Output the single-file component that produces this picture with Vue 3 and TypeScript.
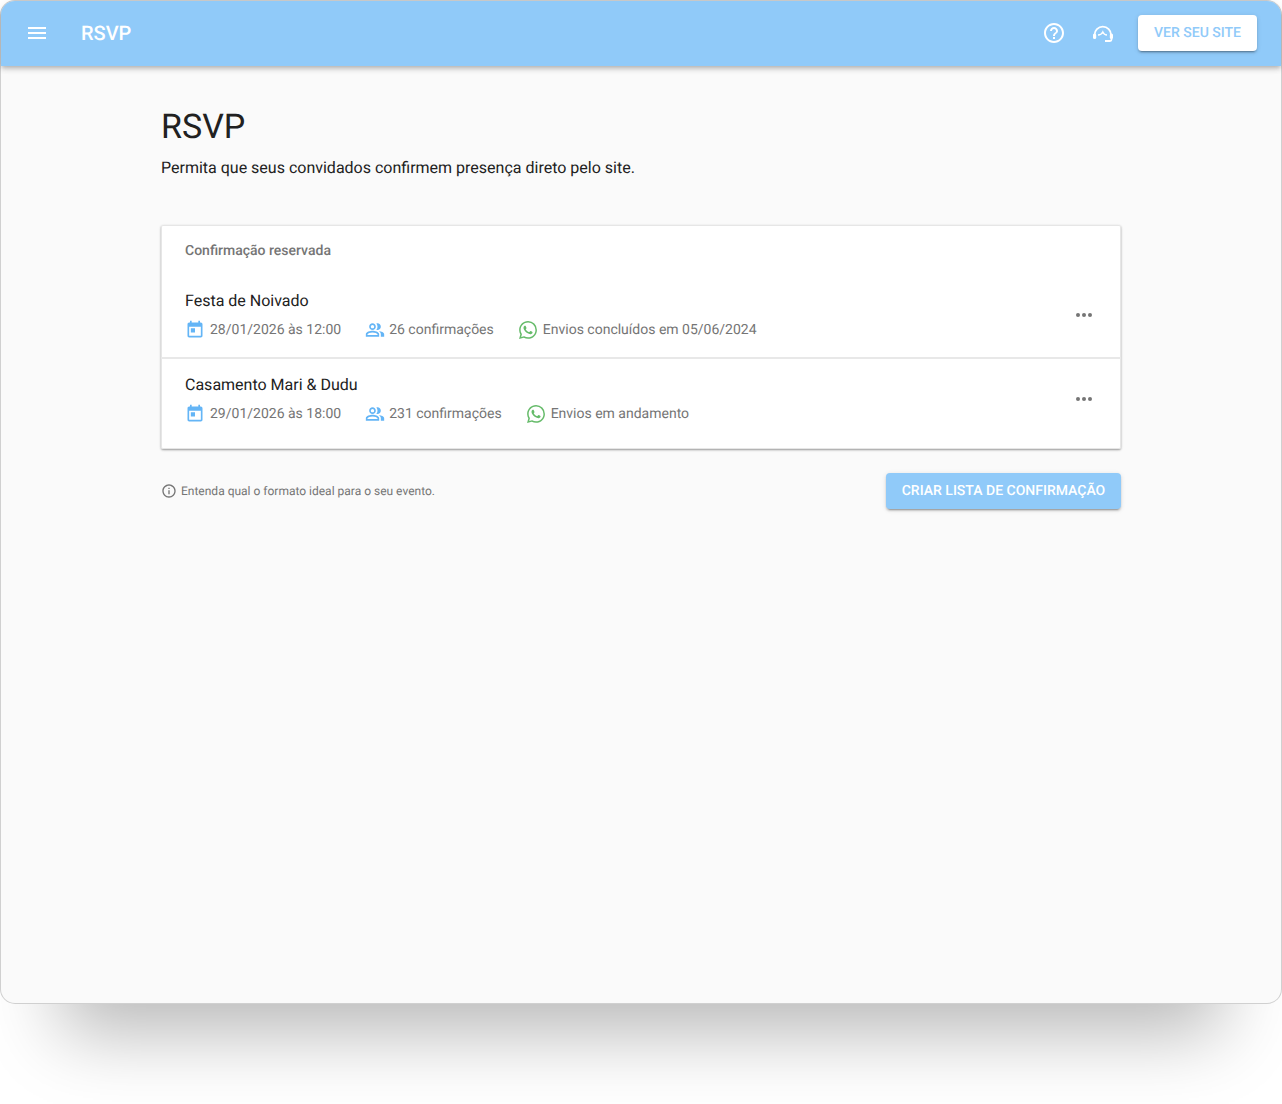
<script setup lang="ts">
interface Row {
  name: string
  date: string
  count: string
  status: string
}
const rows: Row[] = [
  { name: 'Festa de Noivado', date: '28/01/2026 às 12:00', count: '26 confirmações', status: 'Envios concluídos em 05/06/2024' },
  { name: 'Casamento Mari & Dudu', date: '29/01/2026 às 18:00', count: '231 confirmações', status: 'Envios em andamento' },
]
</script>

<template>
  <div class="page">
    <div class="window">
      <header class="bar">
        <svg class="menu" viewBox="0 0 24 24" width="24" height="24"><path fill="#fff" d="M3 18h18v-2H3v2zm0-5h18v-2H3v2zm0-7v2h18V6H3z" /></svg>
        <span class="bar-title">RSVP</span>
        <span class="spacer"></span>
        <svg class="top-icon" viewBox="0 0 24 24" width="24" height="24"><path fill="#fff" d="M11 18h2v-2h-2v2zm1-16C6.48 2 2 6.48 2 12s4.48 10 10 10 10-4.48 10-10S17.52 2 12 2zm0 18c-4.41 0-8-3.59-8-8s3.59-8 8-8 8 3.59 8 8-3.59 8-8 8zm0-14c-2.21 0-4 1.79-4 4h2c0-1.1.9-2 2-2s2 .9 2 2c0 2-3 1.75-3 5h2c0-2.25 3-2.5 3-5 0-2.21-1.79-4-4-4z" /></svg>
        <svg class="top-icon" viewBox="0 0 24 24" width="24" height="24" fill="none" stroke="#fff" stroke-width="1.8">
          <path d="M4.500 14a8.300 8.300 0 0 1 16.600 0" />
          <path d="M8 14c2 0 3.800-1 4.800-3 .8 1.800 2.300 3 4.200 3" stroke-width="1.500" />
          <rect x="3" y="12.500" width="3.200" height="5.500" rx="1.500" fill="#fff" stroke="none" />
          <rect x="19.800" y="12.500" width="3.200" height="5.500" rx="1.500" fill="#fff" stroke="none" />
          <path d="M21.500 17.500v1a1.500 1.500 0 0 1-1.500 1.500h-5" />
        </svg>
        <button class="site-btn">VER SEU SITE</button>
      </header>
      <main class="content">
        <h1 class="title">RSVP</h1>
        <p class="lead">Permita que seus convidados confirmem presença direto pelo site.</p>
        <section class="card">
          <h2 class="card-title">Confirmação reservada</h2>
          <div v-for="row in rows" :key="row.name" class="row">
            <div class="row-main">
              <div class="row-name">{{ row.name }}</div>
              <div class="meta">
                <span class="meta-item">
                  <svg viewBox="0 0 24 24" width="20" height="20"><path fill="#64b5f6" d="M19 3h-1V1h-2v2H8V1H6v2H5c-1.11 0-1.99.9-1.99 2L3 19c0 1.1.89 2 2 2h14c1.1 0 2-.9 2-2V5c0-1.1-.9-2-2-2zm0 16H5V8h14v11zM7 10h5v5H7z" /></svg>
                  {{ row.date }}
                </span>
                <span class="meta-item people">
                  <svg viewBox="0 0 24 24" width="20" height="20"><path fill="#64b5f6" d="M16.67 13.130C18.040 14.060 19 15.320 19 17v3h4v-3c0-2.180-3.570-3.470-6.330-3.870zM15 12c2.210 0 4-1.790 4-4s-1.790-4-4-4c-.47 0-.91.1-1.330.24C14.500 5.270 15 6.580 15 8s-.5 2.730-1.330 3.760c.42.14.86.24 1.330.24zM9 12c2.210 0 4-1.790 4-4s-1.790-4-4-4-4 1.790-4 4 1.790 4 4 4zm0-6c1.100 0 2 .9 2 2s-.9 2-2 2-2-.9-2-2 .9-2 2-2zM9 13c-2.670 0-8 1.340-8 4v3h16v-3c0-2.660-5.330-4-8-4zm6 5H3v-.99C3.200 16.290 6.300 15 9 15s5.800 1.290 6 2z" /></svg>
                  {{ row.count }}
                </span>
                <span class="meta-item chat">
                  <svg viewBox="0 0 24 24" width="18" height="18"><path fill="#66bb6a" d="M17.472 14.382c-.297-.149-1.758-.867-2.03-.967-.273-.099-.471-.148-.67.15-.197.297-.767.966-.94 1.164-.173.199-.347.223-.644.075-.297-.15-1.255-.463-2.39-1.475-.883-.788-1.48-1.761-1.653-2.059-.173-.297-.018-.458.13-.606.134-.133.298-.347.446-.52.149-.174.198-.298.298-.497.099-.198.05-.371-.025-.52-.075-.149-.669-1.612-.916-2.207-.242-.579-.487-.5-.669-.51-.173-.008-.371-.01-.57-.01-.198 0-.52.074-.792.372-.272.297-1.04 1.016-1.04 2.479 0 1.462 1.065 2.875 1.213 3.074.149.198 2.096 3.2 5.077 4.487.709.306 1.262.489 1.694.625.712.227 1.36.195 1.871.118.571-.085 1.758-.719 2.006-1.413.248-.694.248-1.289.173-1.413-.074-.124-.272-.198-.57-.347m-5.421 7.403h-.004a9.87 9.87 0 01-5.031-1.378l-.361-.214-3.741.982.998-3.648-.235-.374a9.86 9.86 0 01-1.51-5.26c.001-5.45 4.436-9.884 9.888-9.884 2.64 0 5.122 1.03 6.988 2.898a9.825 9.825 0 012.893 6.994c-.003 5.45-4.437 9.884-9.885 9.884m8.413-18.297A11.815 11.815 0 0012.05 0C5.495 0 .16 5.335.157 11.892c0 2.096.547 4.142 1.588 5.945L.057 24l6.305-1.654a11.882 11.882 0 005.683 1.448h.005c6.554 0 11.89-5.335 11.893-11.893a11.821 11.821 0 00-3.48-8.413z" /></svg>
                  {{ row.status }}
                </span>
              </div>
            </div>
            <div class="dots"><i></i><i></i><i></i></div>
          </div>
        </section>
        <div class="foot">
          <span class="hint">
            <svg viewBox="0 0 24 24" width="16" height="16"><path fill="#757575" d="M11 7h2v2h-2zm0 4h2v6h-2zm1-9C6.48 2 2 6.48 2 12s4.48 10 10 10 10-4.48 10-10S17.52 2 12 2zm0 18c-4.41 0-8-3.59-8-8s3.59-8 8-8 8 3.59 8 8-3.59 8-8 8z" /></svg>
            Entenda qual o formato ideal para o seu evento.
          </span>
          <button class="create-btn">CRIAR LISTA DE CONFIRMAÇÃO</button>
        </div>
      </main>
    </div>
  </div>
</template>

<style>
html, body { margin: 0; background: #fff; }
</style>

<style scoped>
.page {
  height: 1104px;
  padding: 1px 1px 0;
  box-sizing: border-box;
  overflow: hidden;
  font-family: Roboto, "Liberation Sans", sans-serif;
  text-rendering: geometricPrecision;
}
.window {
  height: 1002px;
  border-radius: 14px;
  background: #fafafa;
  box-shadow: 0 0 0 1px #d0d0d0, 0 90px 70px -60px rgba(0, 0, 0, 0.28);
  display: flex;
  flex-direction: column;
}
.bar {
  height: 65px;
  box-sizing: border-box;
  flex: none;
  background: #90caf9;
  border-radius: 14px 14px 0 0;
  display: flex;
  align-items: center;
  padding: 0 24px 1px;
  box-shadow: 0 2px 4px -1px rgba(0, 0, 0, 0.2), 0 4px 5px rgba(0, 0, 0, 0.1), 0 1px 10px rgba(0, 0, 0, 0.08);
  color: #fff;
}
.menu { flex: none; }
.bar-title { margin-left: 32px; font-size: 20px; font-weight: 500; }
.spacer { flex: 1; }
.top-icon { flex: none; margin-right: 24px; }
.site-btn {
  width: 119px;
  height: 36px;
  border: 0;
  border-radius: 4px;
  background: #fff;
  color: #90caf9;
  font: 500 14px Roboto, sans-serif;
  text-rendering: geometricPrecision;
  box-shadow: 0 3px 1px -2px rgba(0, 0, 0, 0.2), 0 2px 2px rgba(0, 0, 0, 0.14), 0 1px 5px rgba(0, 0, 0, 0.12);
}
.content {
  width: 960px;
  margin: 0 auto;
  padding-top: 41px;
}
.title {
  margin: 0;
  font-size: 34px;
  font-weight: 400;
  line-height: 40px;
  color: #212121;
}
.lead {
  margin: 11px 0 0;
  font-size: 16px;
  line-height: 20px;
  color: #212121;
}
.card {
  margin-top: 47px;
  background: #fff;
  border-radius: 2px;
  box-shadow: inset 0 0 0 1px #e6e6e6, 0 1px 2px rgba(0, 0, 0, 0.3), 0 1px 3px rgba(0, 0, 0, 0.12);
}
.card-title {
  margin: 0;
  box-sizing: border-box;
  height: 48px;
  padding: 18px 24px 0;
  font-size: 14px;
  line-height: 16px;
  font-weight: 500;
  color: #757575;
}
.row {
  display: flex;
  align-items: center;
  justify-content: space-between;
  height: 84px;
  padding: 0 29px 0 24px;
  box-sizing: border-box;
}
.row + .row {
  height: 92px;
  border-top: 2px solid #e8e8e8;
  padding-bottom: 10px;
}
.row-main { padding-top: 1px; }
.row-name {
  font-size: 16px;
  line-height: 20px;
  color: #212121;
}
.meta {
  display: flex;
  gap: 24px;
  margin-top: 9px;
}
.meta-item {
  display: flex;
  align-items: center;
  gap: 5px;
  font-size: 14px;
  line-height: 20px;
  color: #757575;
}
.meta-item svg { flex: none; }
.people { gap: 4px; }
.chat { gap: 6px; margin-left: 1px; }
.dots { display: flex; gap: 2px; }
.dots i {
  display: block;
  width: 4px;
  height: 4px;
  border-radius: 50%;
  background: #757575;
}
.foot {
  display: flex;
  align-items: center;
  justify-content: space-between;
  margin-top: 24px;
}
.hint {
  display: flex;
  align-items: center;
  gap: 4px;
  font-size: 12px;
  color: #757575;
}
.create-btn {
  width: 235px;
  height: 36px;
  border: 0;
  border-radius: 4px;
  background: #90caf9;
  color: #fff;
  font: 500 14px Roboto, sans-serif;
  text-rendering: geometricPrecision;
  box-shadow: 0 3px 1px -2px rgba(0, 0, 0, 0.2), 0 2px 2px rgba(0, 0, 0, 0.14), 0 1px 5px rgba(0, 0, 0, 0.12);
}
</style>
